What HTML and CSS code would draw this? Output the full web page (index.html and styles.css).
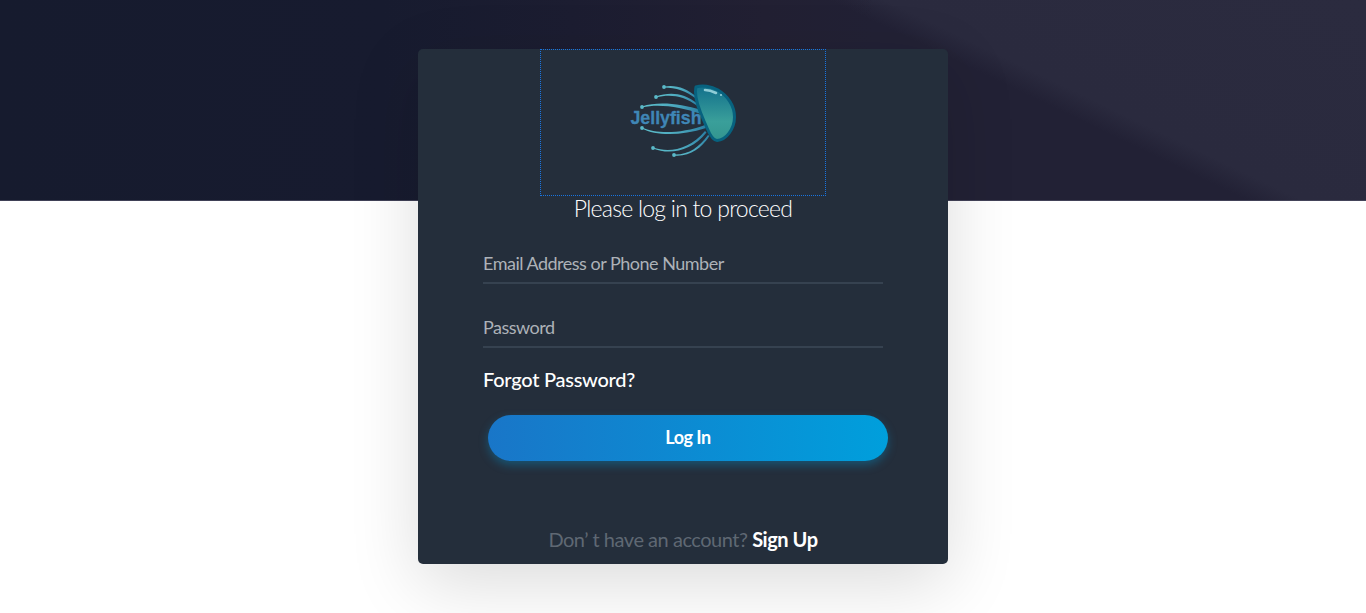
FILE: index.html
```html
<!DOCTYPE html>
<html lang="en">
<head>
    <meta charset="UTF-8">
    <meta name="viewport" content="width=device-width, initial-scale=1.0">
    <title>Jellyfish - Log In</title>
    <link rel="stylesheet" href="styles.css">
</head>
<body>
    <div class="login-card">
        <div class="logo-box">
            <svg class="logo" width="125" height="90" viewBox="0 0 125 90" aria-label="Jellyfish">
                <defs>
                    <linearGradient id="bell" x1="0" y1="0" x2="0" y2="1">
                        <stop offset="0" stop-color="#12708c"/>
                        <stop offset="0.65" stop-color="#3a9f9a"/>
                        <stop offset="1" stop-color="#33958f"/>
                    </linearGradient>
                    <linearGradient id="arm" x1="0" y1="0" x2="1" y2="0">
                        <stop offset="0" stop-color="#5fc0cc"/>
                        <stop offset="0.6" stop-color="#4aa6bd"/>
                        <stop offset="1" stop-color="#2a7ea3"/>
                    </linearGradient>
                </defs>
                <g fill="url(#arm)">
                    <path d="M43 11.5 C55 9.5 65 13 76 22 L75.5 24 C65 16 55 12.5 43 12.5 Z"/>
                    <path d="M35 21.5 C48 17 62 17 77 29 L76.5 31 C62 20 48 19 35 22.5 Z"/>
                    <path d="M21 31.5 C38 26 60 29 80 35 L80 39 C60 32 38 28.5 21 32.5 Z"/>
                    <path d="M21 52.5 C35 59 60 59 84 50 L85 53 C60 61 35 61 21 53.5 Z"/>
                    <path d="M32 72.5 C48 78 68 75 84 56 L85.5 57.5 C70 77 48 80 32 73.5 Z"/>
                    <path d="M53 79.5 C68 80 78 72 87 60 L88.5 61 C80 74 68 82 53 80.5 Z"/>
                </g>
                <g fill="#5ab9c8">
                    <circle cx="43" cy="12" r="1.9"/>
                    <circle cx="35" cy="22" r="1.9"/>
                    <circle cx="21" cy="32" r="1.9"/>
                    <circle cx="21" cy="53" r="1.9"/>
                    <circle cx="32" cy="73" r="1.9"/>
                    <circle cx="53" cy="80" r="1.9"/>
                </g>
                <path d="M75 12 C81 10 90 11 97 15 C107 21 113.5 31 113.5 42 C113.5 54 105 65 96 65.5 C92 65.5 89 60 86 53 C81 41 74.5 29 74.5 17 C74.5 15 74.5 13 75 12 Z" fill="url(#bell)" stroke="#07627f" stroke-width="3"/>
                <path d="M84 15 C88 15 91 16 95 18" fill="none" stroke="#8fccd6" stroke-width="2.6" stroke-linecap="round"/>
                <circle cx="100" cy="20" r="1.1" fill="#8fccd6"/>
                <text class="logo-text" x="9.5" y="49" textLength="71" lengthAdjust="spacingAndGlyphs">Jellyfish</text>
            </svg>
        </div>
        <h1 class="login-title">Please log in to proceed</h1>
        <form class="login-form">
            <input class="login-input" type="text" placeholder="Email Address or Phone Number">
            <input class="login-input" type="password" placeholder="Password">
            <a class="forgot-link" href="#">Forgot Password?</a>
            <button class="login-button" type="button">Log In</button>
        </form>
        <p class="signup-line">Don’ t have an account? <a href="#">Sign Up</a></p>
    </div>
</body>
</html>
```

FILE: styles.css
```css
html, body {
    height: 100%;
}

body {
    box-sizing: border-box;
    margin: 0;
    padding-top: 49px;
    overflow: hidden;
    font-family: Lato, "Open Sans", sans-serif;
    background-color: #fff;
    background-repeat: no-repeat;
    background-size: 100% 201px;
    background-image:
        linear-gradient(180deg, rgba(74, 74, 96, 0) 200px, rgba(74, 74, 96, 0.8) 200px),
        linear-gradient(90deg, #161b2e 0%, #171b2f 28%, #1c1d31 42%, #222033 56%, rgba(34, 33, 53, 0) 64%),
        linear-gradient(205.6deg, #2b2b3f 0, #2a2a3e 208px, #222135 232px, #222135 100%);
}

/* Main card */
.login-card {
    box-sizing: border-box;
    width: 530px;
    height: 515px;
    margin: 0 auto;
    background-color: #242e3b;
    border-radius: 5px;
    box-shadow: 0 20px 70px rgba(0, 0, 0, 0.14);
    color: #fff;
}

.logo-box {
    box-sizing: border-box;
    width: 286px;
    height: 147px;
    margin: 0 auto;
    padding-top: 25px;
    border: 1px dotted #1874e0;
    display: flex;
    justify-content: center;
}

.logo {
    display: block;
}

.logo-text {
    font-family: "Liberation Sans", Arial, sans-serif;
    font-size: 19px;
    font-weight: 700;
    fill: #3f86b6;
    stroke: #3f86b6;
    stroke-width: 0.3px;
}

.login-title {
    margin: 0;
    font-size: 23px;
    font-weight: 300;
    line-height: 24px;
    letter-spacing: -0.75px;
    text-align: center;
}

.login-form {
    display: flex;
    flex-direction: column;
    width: 400px;
    margin: 26px auto 0;
}

.login-input {
    box-sizing: border-box;
    width: 100%;
    height: 38px;
    margin-bottom: 26px;
    padding: 0 0 2px;
    background: transparent;
    border: none;
    border-bottom: 2px solid #364250;
    color: #fff;
    font-family: Lato, sans-serif;
    font-size: 18px;
    letter-spacing: -0.5px;
    outline: none;
}

.login-input::placeholder {
    color: #adb2b8;
    opacity: 1;
}

.forgot-link {
    margin-top: -8px;
    color: #fff;
    font-size: 20px;
    font-weight: 500;
    line-height: 26px;
    letter-spacing: -0.25px;
    text-decoration: none;
}

.login-button {
    width: 400px;
    height: 46px;
    margin: 23px 0 0 5px;
    padding: 0 0 2px;
    border: none;
    border-radius: 23px;
    background: linear-gradient(90deg, #1976c8, #009fdc);
    box-shadow: 0 4px 10px rgba(0, 159, 220, 0.35);
    color: #fff;
    font-family: Lato, sans-serif;
    font-size: 18px;
    font-weight: 700;
    letter-spacing: -0.5px;
    cursor: pointer;
}

.signup-line {
    margin: 64px 0 0;
    color: #5f6873;
    font-size: 20px;
    font-weight: 400;
    line-height: 28px;
    letter-spacing: -0.47px;
    text-align: center;
}

.signup-line a {
    color: #fff;
    font-weight: 700;
    letter-spacing: -0.45px;
    text-decoration: none;
}
```
